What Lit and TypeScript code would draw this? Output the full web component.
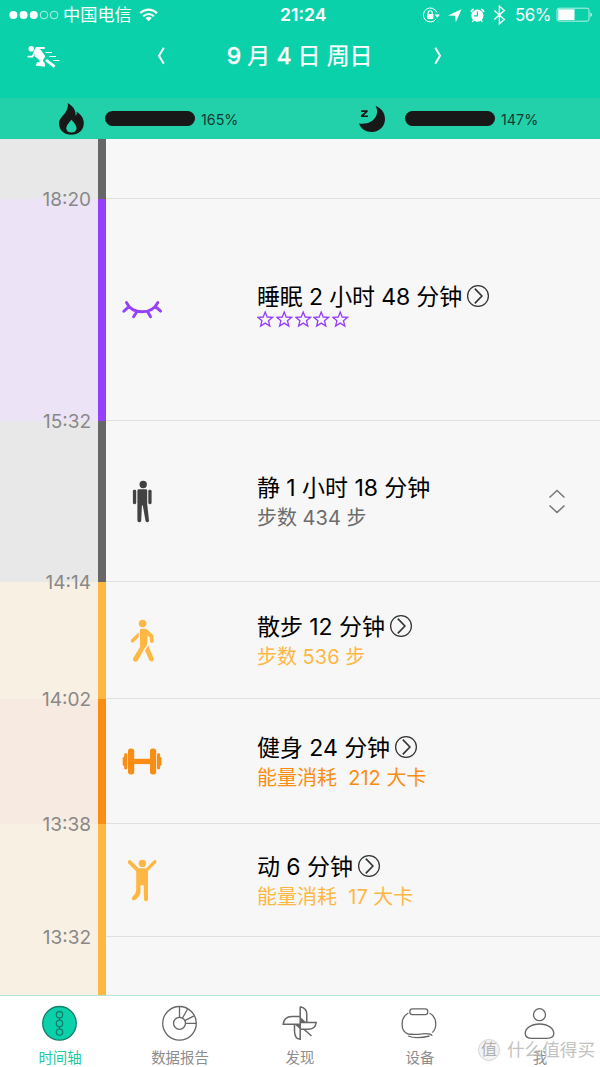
import { LitElement, html, css, svg, nothing } from "lit";
import { customElement, property } from "lit/decorators.js";

type Row = {
  kind: string;
  height: number;
  time?: string;
  icon?: string;
  title?: string;
  detail?: string;
  stars?: boolean;
  link?: boolean;
  expand?: boolean;
};

const ROWS: Row[] = [
  { kind: "still", height: 60, time: "18:20" },
  { kind: "sleep", height: 222, time: "15:32", icon: "eye", title: "睡眠 2 小时 48 分钟", stars: true, link: true },
  { kind: "still", height: 161, time: "14:14", icon: "stand", title: "静 1 小时 18 分钟", detail: "步数 434 步", expand: true },
  { kind: "walk", height: 117, time: "14:02", icon: "walk", title: "散步 12 分钟", detail: "步数 536 步", link: true },
  { kind: "gym", height: 125, time: "13:38", icon: "bell", title: "健身 24 分钟", detail: "能量消耗  212 大卡", link: true },
  { kind: "walk", height: 113, time: "13:32", icon: "move", title: "动 6 分钟", detail: "能量消耗  17 大卡", link: true },
  { kind: "walk", height: 58 },
];

const ICONS: Record<string, unknown> = {
  eye: svg`<g fill="none" stroke="#963ffc" stroke-width="2.9" stroke-linecap="round">
    <path d="M6.5 13.6Q11 22.8 22 22.8Q33 22.8 37.8 13.6M8.8 17.6L3.8 22.3M35.5 17.6L40.6 22.1M16.5 23.2L13.6 27.8M28 23.2L30.5 27.8"/></g>`,
  stand: svg`<g fill="#424242"><circle cx="23.2" cy="4.5" r="3.7"/>
    <rect x="12.9" y="9.8" width="3.3" height="14.4" rx="1.4"/><rect x="28.3" y="9.8" width="3.3" height="14.4" rx="1.4"/>
    <path d="M19 9.3H26Q27.2 9.3 27.2 10.6V24L29 40.5Q29.1 42 27.5 42.2Q25.9 42.3 25.5 40.8L22.8 25.5H21.9L21.2 40.7Q21 42.2 19.3 42.2Q17.4 42.1 17.4 40.5V10.6Q17.4 9.3 19 9.3Z"/></g>`,
  walk: svg`<g fill="#ffb744"><circle cx="22.6" cy="4.6" r="3.8"/>
    <path d="M19.9 10.5Q20.4 9.7 22 9.7H25Q26.6 9.7 28 11.2L32.6 15.6Q33.6 16.4 33.6 17.6V22Q33.6 24 31.8 24Q30.1 24 29.9 22.3V18.6L27.4 16.4V23.7Q27.4 25.8 25.9 27.7L24.2 30L17.8 41.4Q16.5 43.2 14.4 42.4Q12.3 41.3 13.1 39.3L20.3 27.5Q19.8 26.5 19.9 25Z"/>
    <path d="M18.7 13.3V18L13.7 23.2Q12.4 24.2 11.3 23.1Q10.2 21.7 11.3 20.5Z"/>
    <path d="M25 31.4L28.2 26.5L33.6 39.3Q34.2 41.5 32.4 42.4Q30.4 43 29.2 41.1Z"/></g>`,
  bell: svg`<g fill="#fa8e14"><rect x="8" y="8.4" width="6.2" height="26" rx="2.6"/><rect x="30" y="8.4" width="6.2" height="26" rx="2.6"/>
    <rect x="13" y="18.8" width="18" height="5.3"/><rect x="4.2" y="13.2" width="3.1" height="16.2" rx="1.3"/><rect x="37" y="13.2" width="3.1" height="16.2" rx="1.3"/>
    <rect x="2.7" y="17" width="2.6" height="8.8" rx="1.2"/><rect x="38.9" y="17" width="2.6" height="8.8" rx="1.2"/></g>`,
  move: svg`<g fill="#ffb744"><circle cx="22.4" cy="4.4" r="3.7"/>
    <path d="M8.2 1.8Q9.3 .5 10.7 1.6L18.7 9.3H26.2L33.8 1.6Q35.2 .5 36.2 1.6Q37 2.7 36 3.9L28 12V40.3Q28 42.3 25.9 42.3Q24 42.3 24 40.3L23.7 26.2H20.5V33.5Q20.5 36 18.3 38L15.5 40.8Q14 41.8 12.6 41Q11.3 39.9 12.2 38.2L15.3 34.5L16.2 31V12.3L8.3 4.5Q7.3 3.1 8.2 1.8Z"/></g>`,
};

const star = html`<svg width="18.8" height="19" viewBox="0 0 18.8 19"><path d="M8.2 2L10.2 7L15.6 7.3L11.5 10.7L12.8 16L8.2 13.1L3.6 16L4.9 10.7L.9 7.3L6.2 7Z" fill="none" stroke="#963ffc" stroke-width="1.3"/></svg>`;

const arrow = html`<svg class="go" width="24" height="24" viewBox="0 0 24 24" fill="none" stroke="#333"><circle cx="12" cy="12" r="10.4" stroke-width="1.25"/><path d="M8.8 4.6L15.9 12L8.8 19.4" stroke-width="1.6"/></svg>`;

@customElement("timeline-row")
class TimelineRow extends LitElement {
  @property({ attribute: false }) row!: Row;

  static styles = css`
    :host { display: block; }
    .row { display: grid; grid-template-columns: 98px 8px 1fr; height: 100%; }
    .side { position: relative; }
    .time { position: absolute; right: 7px; bottom: -13px; line-height: 24px; font-size: 19px; color: #888; z-index: 1; }
    .body { display: grid; grid-template-columns: 151px 1fr; align-items: center; border-bottom: 1px solid #e0e0e0; position: relative; box-sizing: border-box; }
    .last .body { border: 0; }
    .icon { margin: 2px 0 0 14px; display: block; }
    .title { display: flex; align-items: center; font-size: 23px; line-height: 29px; color: #000; white-space: pre; letter-spacing: -0.05px; }
    .detail { font-size: 20px; line-height: 28px; padding-top: 1px; white-space: pre; }
    .text { padding-top: 4px; }
    .sleep .text { padding-bottom: 9px; padding-top: 3px; }
    .sleep .title { letter-spacing: -0.15px; }
    .go { margin: -3px 0 0 4px; }
    .stars { display: flex; height: 19px; margin-top: -2px; padding-bottom: 1px; }
    .expand { position: absolute; right: 33px; top: 67px; }
    .still .side { background: #e8e8e8; } .still .bar { background: #676767; }
    .sleep .side { background: #ece3f7; } .sleep .bar { background: #963ffc; }
    .walk .side { background: #f9f0e4; } .walk .bar { background: #ffb744; }
    .gym .side { background: #f7eae0; } .gym .bar { background: #fa8e14; }
    .still .detail { color: #6c6c6c; } .walk .detail { color: #ffb744; } .gym .detail { color: #fa8e14; }
  `;

  render() {
    const r = this.row;
    return html`<div class="row ${r.kind} ${r.time ? "" : "last"}">
      <div class="side">${r.time ? html`<span class="time">${r.time}</span>` : nothing}</div>
      <div class="bar"></div>
      <div class="body">
        ${r.icon
          ? html`<svg class="icon" width="44" height="44" viewBox="0 0 44 44">${ICONS[r.icon]}</svg>
              <div class="text">
                <div class="title"><span>${r.title}</span>${r.link ? arrow : nothing}</div>
                ${r.stars ? html`<div class="stars">${[0, 1, 2, 3, 4].map(() => star)}</div>` : html`<div class="detail">${r.detail}</div>`}
              </div>`
          : nothing}
        ${r.expand
          ? html`<svg class="expand" width="20" height="28" viewBox="0 0 20 28" fill="none" stroke="#777" stroke-width="1.5"><path d="M2.5 9.5L10 2.5L17.5 9.5M2.5 17.5L10 24.5L17.5 17.5"/></svg>`
          : nothing}
      </div>
    </div>`;
  }
}

const TABS = [
  { label: "时间轴", active: true, icon: svg`<circle cx="19.5" cy="19.3" r="16.8" fill="#0bd1aa" stroke="#12806c" stroke-width="1.3"/><g fill="none" stroke="#12806c" stroke-width="1.3"><circle cx="19.5" cy="10.7" r="3.2"/><circle cx="19.5" cy="19.4" r="3.2"/><circle cx="19.5" cy="28.1" r="3.2"/><path d="M19.5 14V16.2M19.5 22.6V24.9"/></g>` },
  { label: "数据报告", icon: svg`<circle cx="19.5" cy="19.3" r="16.8"/><circle cx="19.5" cy="19.3" r="6"/><path d="M19.5 2.5V13.3M27.7 4.7L22.5 14M34 11.8L24.8 16.6M36.3 19.3H25.5"/>` },
  { label: "发现", icon: svg`<path d="M20.2 2.8V35.2Q14.7 35 14.5 27V20.3M20.2 2.8Q26.6 4 26.8 10V18.5M20.2 20.3H3.2Q4 12.6 12 12.6H20.2M20.2 18.5H36.2Q35.5 25.2 28 25.2H20.2M24 25.2L31.5 32" stroke-width="1.5"/><path d="M20.2 13L26.5 18.5H20.2ZM14.8 20.5L20.2 25.2V20.5Z" fill="#666" stroke="none"/>` },
  { label: "设备", icon: svg`<rect x="9.9" y="4.9" width="17.8" height="5.8" rx="2.4"/><path d="M8.3 9Q2.1 12.5 2.1 20Q2.1 28.3 8.3 30Q14.3 30.9 22.3 29.9Q29.8 28.7 32.3 31.6M8.1 32Q16.3 35.2 29.5 32M29.5 9Q35.8 12.5 35.8 20Q35.5 26 32.3 28.6"/>` },
  { label: "我", icon: svg`<circle cx="19.5" cy="10.7" r="6"/><path d="M19.5 20C28 20 33.8 24.5 33.8 29.5C33.8 33 31.5 34.3 27 34.3H12C7.5 34.3 5.2 33 5.2 29.5C5.2 24.5 11 20 19.5 20Z"/>` },
];

@customElement("app-root")
class AppRoot extends LitElement {
  static styles = css`
    :host { display: flex; flex-direction: column; height: 1067px; overflow: hidden; position: relative; background: #f7f7f7; font-family: Inter, "Noto Sans CJK SC", sans-serif; font-weight: 400; }
    svg { display: block; }
    .head { height: 98px; background: #0bd1aa; color: #fff; }
    .status { height: 30px; display: grid; grid-template-columns: 280px 48px 1fr; align-items: center; font-size: 17.2px; line-height: 30px; }
    .left, .right { display: flex; align-items: center; }
    .left { padding-left: 9px; }
    .carrier { margin: 0 7px 0 3px; }
    .right { justify-content: flex-end; padding-right: 7px; }
    .clock { font-weight: 600; font-size: 17.6px; }
    .pct { margin: 0 5px 0 9px; font-size: 17px; letter-spacing: -0.5px; }
    .nav { height: 54px; display: grid; grid-template-columns: 150px 300px 150px; align-items: center; }
    .runner { margin-left: 26px; }
    .date { display: flex; align-items: center; justify-content: space-between; padding: 0 2px 2px 6px; font-size: 23px; line-height: 28px; white-space: pre; letter-spacing: -0.2px; }
    .day { padding-left: 3px; -webkit-text-stroke: 0.25px #fff; }
    .num { font-weight: 500; }
    .goals { height: 41px; background: #22d1aa; display: grid; grid-template-columns: 1fr 1fr; align-items: center; }
    .goal { display: flex; align-items: center; height: 41px; }
    .goal svg { margin-left: 57px; }
    .track { width: 90px; height: 14.5px; border-radius: 8px; background: #181818; margin: 0 6px 0 18px; }
    .val { font-size: 14.3px; color: #173a33; margin-top: 1px; }
    .list { flex: none; height: 856px; }
    .tabs { height: 72px; box-sizing: border-box; border-top: 1px solid #b5e5da; background: #fff; display: grid; grid-template-columns: repeat(5, 120px); }
    .tab { display: flex; flex-direction: column; align-items: center; padding-top: 8px; font-size: 14.4px; line-height: 20px; color: #8d8d8d; }
    .tab svg { fill: none; stroke: #666; stroke-width: 1.3; margin-left: -2px; }
    .tab span { margin-top: 5px; }
    .tab.active { color: #20c89f; }
    .mark { position: absolute; left: 478px; top: 1037px; display: flex; align-items: center; gap: 7px; color: #c2c2c2; font-size: 17.6px; line-height: 26px; white-space: nowrap; }
    .seal { width: 22px; height: 22px; box-sizing: border-box; border-radius: 50%; border: 1px solid #d6d6d6; background: #f3f3f3; color: #b0b0b0; text-align: center; line-height: 19px; font-size: 16px; }
  `;

  render() {
    return html`
      <header class="head">
        <div class="status">
          <div class="left">
            <svg width="51" height="12" viewBox="0 0 51 12" fill="#fff"><circle cx="4.4" cy="6" r="4"/><circle cx="14.6" cy="6" r="4"/><circle cx="24.8" cy="6" r="4"/><g fill="none" stroke="#fff" stroke-width=".7"><circle cx="35" cy="6" r="3.8"/><circle cx="45.1" cy="6" r="3.8"/></g></svg>
            <span class="carrier">中国电信</span>
            <svg width="20" height="14" viewBox="0 0 20 14" fill="none" stroke="#fff" stroke-width="2"><path d="M1.2 5.1Q9.5 -1.8 18 5.1M4.2 8.3Q9.6 3.8 15 8.3"/><path d="M6.4 10Q9.6 7.3 12.8 10L9.6 13.3Z" fill="#fff" stroke="none"/></svg>
          </div>
          <span class="clock">21:24</span>
          <div class="right">
            <svg width="84" height="22" viewBox="0 0 84 22" fill="none" stroke="#fff">
              <path d="M14.9 8.5A7 7 0 1 0 14.2 14.8" stroke-width="1"/><path d="M12.6 10.5H18L15.3 13.8Z" fill="#fff" stroke="none"/><rect x="5" y="10" width="6.4" height="5" fill="#fff" stroke="none"/><path d="M6.2 10V8Q8.2 5.5 10.2 8V10" stroke-width="1.1"/>
              <path d="M26 11.5L39.5 5.3L33.8 18.3L33 11.7Z" fill="#fff" stroke="none"/>
              <circle cx="55.4" cy="11.6" r="6.1" fill="#fff" stroke="none"/><path d="M49 8Q49.4 5.8 51.6 4.9M61.8 8Q61.4 5.8 59.2 4.9" stroke-width="1.6"/><path d="M51.6 16L50.4 17.8M59.2 16L60.4 17.8" stroke-width="1.3"/><path d="M55.4 7.5V11.8H52" stroke="#0bd1aa" stroke-width="1.2"/>
              <path d="M72.3 6.5L82.3 15.4L77.4 19.8V2.2L82.3 6.6L72.3 15.5" stroke-width="1.4"/>
            </svg>
            <span class="pct">56%</span>
            <svg width="37" height="16" viewBox="0 0 37 16"><rect x="1" y="1.2" width="32" height="13" rx="2" fill="none" stroke="#fff" stroke-width=".7"/><rect x="2.2" y="2.3" width="16.3" height="10.8" fill="#fff"/><path d="M34.5 5.2Q37 7.7 34.5 10.2Z" fill="#fff"/></svg>
          </div>
        </div>
        <div class="nav">
          <svg class="runner" width="36" height="26" viewBox="0 0 36 26"><circle cx="5.3" cy="4.7" r="2.8" fill="#fff"/><g fill="none" stroke="#fff" stroke-linejoin="round" stroke-linecap="round"><path d="M18 4H10.5L6.5 12.6H2.3" stroke-width="1.8"/><path d="M19.5 8.5H26M23 12.5H30M27 16.5H33.5" stroke-width="1.1" stroke-linecap="butt"/></g><path d="M10 4L14.5 5.5L19.3 12.3L16.8 16.8L19.2 20L18.7 22.8L9.5 21.4L11.3 18L14 18.3L12.4 15L8.3 12Z" fill="#fff"/><path d="M20 16L28.6 22.7" stroke="#fff" stroke-width="2.8"/></svg>
          <div class="date">
            <svg width="10" height="20" viewBox="0 0 10 20" fill="none" stroke="#fff" stroke-width="2"><path d="M7.8 1.8L3 9.8L7.8 17.8"/></svg>
            <span class="day"><span class="num">9</span> 月 <span class="num">4</span> 日 周日</span>
            <svg width="18" height="20" viewBox="0 0 18 20" fill="none" stroke="#fff" stroke-width="2"><path d="M5.3 1.8L10 9.8L5.3 17.8"/></svg>
          </div>
        </div>
      </header>
      <div class="goals">
        <div class="goal">
          <svg width="30" height="36" viewBox="0 0 30 36"><path d="M10.8 2C15.5 5 19.3 9 18.5 14.5Q20.3 14 19.5 10.5C24 13.5 27 17.5 26.8 22.5C26.6 29.5 21 33.8 14.5 33.8C7 33.8 2 29 2 22.5C2 15 12 13 10.8 2Z" fill="#181818"/><path d="M14.5 18.7Q19.5 24 19.5 27.2Q19 31.5 14.5 31.6Q9.8 31.5 9.3 27.2Q9.3 24 14.5 18.7Z" fill="#22d1aa"/></svg>
          <div class="track"></div><span class="val">165%</span>
        </div>
        <div class="goal">
          <svg width="30" height="36" viewBox="0 0 30 36"><path d="M18.5 5C23 12 18 24.5 2 22.5C3.5 27.5 9 31 15 31C22 31 28 25.5 28 18C28 11.5 24 7 18.5 5Z" fill="#181818"/><path d="M4.2 9.2H10.7V10.8L6.7 14.4H10.9V16.1H3.9V14.5L7.9 10.9H4.2Z" fill="#181818"/></svg>
          <div class="track"></div><span class="val">147%</span>
        </div>
      </div>
      <main class="list">
        ${ROWS.map((r) => html`<timeline-row .row=${r} style="height:${r.height}px"></timeline-row>`)}
      </main>
      <nav class="tabs">
        ${TABS.map((t) => html`<div class="tab ${t.active ? "active" : ""}"><svg width="39" height="39" viewBox="0 0 39 39">${t.icon}</svg><span>${t.label}</span></div>`)}
      </nav>
      <div class="mark"><span class="seal">值</span><span>什么值得买</span></div>
    `;
  }
}
